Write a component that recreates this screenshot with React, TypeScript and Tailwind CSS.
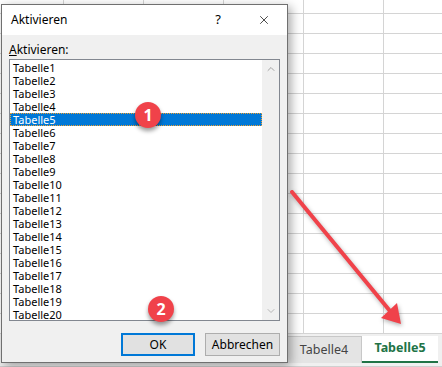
import { ChevronUp, ChevronDown, X } from 'lucide-react';

const sheets = Array.from({ length: 20 }, (_, i) => `Tabelle${i + 1}`);
const rowHeights = [14, ...Array(16).fill(20)];
const colWidths = [64, 80, 80, 80, 80, 80];

function Badge({ n, className }: { n: number; className: string }) {
    return (
        <div
            className={`absolute w-[26px] h-[26px] rounded-full bg-[#f0424a] text-white flex items-center justify-center text-[16px] font-bold shadow-[0_3px_4px_rgba(0,0,0,0.4)] font-['Open_Sans'] ${className}`}
        >
            {n}
        </div>
    );
}

export default function App() {
    return (
        <div className="relative w-[442px] h-[367px] overflow-hidden bg-white font-['Noto_Sans',sans-serif] text-black">
            {/* sheet grid */}
            <div className="flex flex-col">
                {rowHeights.map((h, r) => (
                    <div key={r} className="flex" style={{ height: h }}>
                        {colWidths.map((w, c) => (
                            <div
                                key={c}
                                className="shrink-0 border-r border-b border-[#d4d4d4]"
                                style={{ width: w }}
                            />
                        ))}
                    </div>
                ))}
            </div>

            {/* sheet tabs */}
            <div className="h-[33px] bg-[#f0f0f0] flex items-start pl-[286px] pt-[2px] border-b border-[#d0d0d0]">
                <div className="w-[76px] h-[27px] bg-[#e4e4e4] border border-b-0 border-[#c8c8c8] flex items-center justify-center text-[12.5px] text-[#444]">
                    Tabelle4
                </div>
                <div className="w-[76px] h-[27px] bg-white border-b-2 border-[#217346] flex items-center justify-center text-[12.5px] font-bold text-[#217346]">
                    Tabelle5
                </div>
            </div>

            {/* dialog */}
            <div className="absolute left-[1px] top-[4px] w-[287px] h-[359px] border border-[#707070] bg-[#f0f0f0] shadow-[3px_3px_10px_rgba(0,0,0,0.35)] flex flex-col">
                <div className="h-[30px] bg-white flex items-center pl-[9px] pr-[16px] text-[12px]">
                    <span className="flex-1">Aktivieren</span>
                    <span className="mr-[36px] text-[13px]">?</span>
                    <X size={14} strokeWidth={1.2} />
                </div>
                <div className="pl-[7px] pt-[7px] text-[12px] leading-[16px]">
                    <span className="underline">A</span>ktivieren:
                </div>
                <div className="ml-[7px] mt-[1px] w-[271px] h-[262px] border border-[#828790] bg-white flex">
                    <div className="flex-1 pt-[1px]">
                        {sheets.map((s) =>
                            s === 'Tabelle5' ? (
                                <div
                                    key={s}
                                    className="h-[13px] leading-[11px] pl-[2px] bg-[#0078d7] text-white border border-dotted border-[#f0a030] text-[11px]"
                                >
                                    {s}
                                </div>
                            ) : (
                                <div key={s} className="h-[13px] leading-[13px] pl-[3px] text-[11px]">
                                    {s}
                                </div>
                            ),
                        )}
                    </div>
                    <div className="w-[17px] bg-[#f0f0f0] flex flex-col justify-between items-center py-[3px] text-[#a3a3a3]">
                        <ChevronUp size={12} strokeWidth={2} />
                        <ChevronDown size={12} strokeWidth={1.5} />
                    </div>
                </div>
                <div className="flex justify-end gap-[10px] pr-[7px] mt-[12px]">
                    <button className="w-[74px] h-[23px] bg-[#e1e1e1] border-2 border-[#0078d7] text-[12px]">
                        OK
                    </button>
                    <button className="w-[75px] h-[23px] bg-[#e1e1e1] border border-[#adadad] text-[12px]">
                        Abbrechen
                    </button>
                </div>
            </div>

            {/* annotations */}
            <Badge n={1} className="left-[135px] top-[102px]" />
            <Badge n={2} className="left-[148px] top-[296px]" />
            <svg
                className="absolute left-0 top-0 drop-shadow-[1px_2px_2px_rgba(0,0,0,0.3)]"
                width="442"
                height="367"
                viewBox="0 0 442 367"
            >
                <line x1="292" y1="192" x2="390" y2="311" stroke="#f0424a" strokeWidth="4" strokeLinecap="round" />
                <polygon points="401,324 381,318 397,303" fill="#f0424a" />
            </svg>
        </div>
    );
}
